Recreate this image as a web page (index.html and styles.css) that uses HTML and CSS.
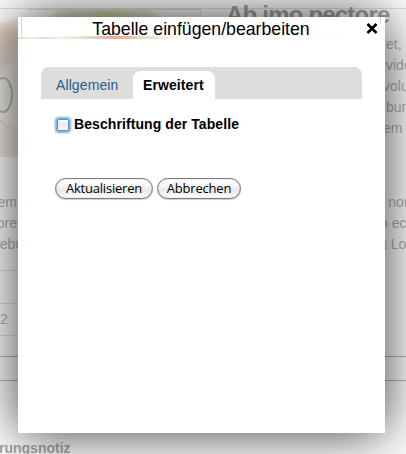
FILE: index.html
```html
<!DOCTYPE html>
<html lang="de">
<head>
<meta charset="utf-8">
<title>Tabelle einfügen/bearbeiten</title>
<link rel="stylesheet" href="styles.css">
</head>
<body>
<main class="page">
  <header class="article-head">
    <svg class="photo" width="202" height="148" viewBox="0 0 202 148">
      <defs>
        <linearGradient id="plate" x1="0" y1="0" x2="0" y2="1">
          <stop offset="0" stop-color="#fff"/>
          <stop offset=".12" stop-color="#f2e9e0"/>
          <stop offset=".4" stop-color="#eeeae4"/>
          <stop offset="1" stop-color="#f4f2ed"/>
        </linearGradient>
        <filter id="soft"><feGaussianBlur stdDeviation="4"/></filter>
      </defs>
      <path d="M0 14Q14 12 28 0H202V148H0Z" fill="url(#plate)"/>
      <g filter="url(#soft)">
        <ellipse cx="105" cy="9" rx="55" ry="10" fill="#d8d3b4"/>
        <ellipse cx="108" cy="3" rx="13" ry="3" fill="#b9c98e"/>
        <path d="M22 18Q20 50-4 66V20Z" fill="#e2d1c3"/>
        <path d="M0 112Q14 122 22 118V148H0Z" fill="#ebe7dd"/>
      </g>
      <ellipse cx="3" cy="86" rx="9" ry="17" fill="none" stroke="#b9b8b5" stroke-width="2"/>
      <path d="M0 111Q9 122 20 119" fill="none" stroke="#e2dfd6" stroke-width="2"/>
      <path d="M28 .5H200.5V12" fill="none" stroke="#ddd"/>
    </svg>
    <h1>Ab imo pectore</h1>
  </header>
  <div class="columns">
    <div class="col-left">
      <p>em</p><p>ore</p><p class="cut">rebu</p>
      <div class="rows"><div></div><div>2</div></div>
    </div>
    <div class="col-right">
      <p class="in">et, c</p><p class="in">vide</p><p>volup</p><p class="in">bur</p><p>em i</p>
      <p class="in second">&#8202;&#8202;nor</p><p class="out">o ec</p><p>t Lo</p>
    </div>
  </div>
  <div class="band"></div>
  <h2>rungsnotiz</h2>
</main>

<section class="dialog" role="dialog">
  <header class="titlebar">
    <svg class="strip" width="367" height="23" viewBox="0 0 367 23">
      <defs>
        <linearGradient id="peek">
          <stop offset="0" stop-color="#dedad6"/>
          <stop offset=".08" stop-color="#f3eeea"/>
          <stop offset=".15" stop-color="#f2d8cc"/>
          <stop offset=".25" stop-color="#f6ece2"/>
          <stop offset=".36" stop-color="#eee3d0"/>
          <stop offset=".46" stop-color="#d8d3bd"/>
          <stop offset=".56" stop-color="#f0a79a"/>
          <stop offset=".64" stop-color="#f2b4a4"/>
          <stop offset=".72" stop-color="#e3dcc6"/>
          <stop offset=".86" stop-color="#f8eed9"/>
          <stop offset="1" stop-color="#fff"/>
        </linearGradient>
      </defs>
      <path d="M3.500 0V20M362.500 7V0" stroke="#d5d5d5" fill="none"/>
      <path d="M0 20H25L70 19H170V22H0Z" fill="url(#peek)"/>
      <path d="M205 21.500H325" stroke="#eee" stroke-dasharray="3 9 2 14"/>
    </svg>
    <span class="title">Tabelle einfügen/bearbeiten</span>
    <svg class="close" width="12" height="11" viewBox="0 0 12 11"><path d="M1.500 1L10.500 10M10.500 1L1.500 10" stroke="#000" stroke-width="2.600"/></svg>
  </header>
  <div class="content">
    <nav class="tabs">
      <a class="tab">Allgemein</a>
      <a class="tab active">Erweitert</a>
    </nav>
    <form class="panel">
      <label class="caption"><span class="box"></span>Beschriftung der Tabelle</label>
      <div class="actions">
        <button type="button">Aktualisieren</button>
        <button type="button">Abbrechen</button>
      </div>
    </form>
  </div>
</section>
</body>
</html>
```
FILE: styles.css
```css
* { box-sizing: border-box; }
body {
  margin: 0;
  width: 406px;
  height: 454px;
  overflow: hidden;
  position: relative;
  background: #fff;
  font-family: "Liberation Sans", Arial, sans-serif;
}
.page {
  height: 454px;
  overflow: hidden;
  padding-top: 8px;
  color: #b4b4b4;
}
.article-head {
  display: flex;
  height: 25px;
  gap: 24px;
  border-top: 1px solid #e2e2e2;
}
.photo { flex: none; }
h1 {
  margin: -8px 0 0;
  font-size: 24px;
  line-height: 28px;
  letter-spacing: -.8px;
  white-space: nowrap;
  color: #a5a5a5;
}
.columns {
  display: flex;
  justify-content: space-between;
  height: 323px;
  font-size: 14px;
  line-height: 21px;
}
.columns p { margin: 0; white-space: nowrap; }
.col-left { width: 17px; padding-top: 159px; }
.col-left p { display: flex; justify-content: flex-end; }
.col-left .cut { margin-right: -6px; }
.col-right { width: 23px; padding-top: 1px; }
.col-right .in { padding-left: 3px; }
.col-right .out { margin-left: -3px; }
.col-right .second { margin-top: 53px; }
.rows { width: 20px; margin-top: 15px; }
.rows div {
  height: 33px;
  border-top: 1px solid #e4e4e4;
  line-height: 31px;
}
.rows div:last-child { border-bottom: 1px solid #e4e4e4; }
.band {
  height: 25px;
  border-top: 1px solid #b8b8b8;
  border-bottom: 1px solid #b8b8b8;
}
h2 {
  margin: 58px 0 0 -1px;
  font-size: 14px;
  line-height: 18px;
  color: #a8a8a8;
}
.dialog {
  position: absolute;
  left: 18px;
  top: 17px;
  width: 367px;
  height: 416px;
  background: #fff;
  box-shadow: 0 0 50px rgba(0, 0, 0, .78);
}
.titlebar {
  position: relative;
  display: flex;
  align-items: center;
  justify-content: center;
  height: 23px;
}
.strip { position: absolute; left: 0; top: 0; }
.title { position: relative; font-size: 17.7px; line-height: 23px; padding-top: 1px; color: #000; white-space: nowrap; margin-left: -1px; }
.close { position: absolute; right: 7px; top: 6px; }
.content { padding: 27px 23px 0; }
.tabs {
  display: flex;
  height: 32px;
  padding: 4px 0 0;
  background: #ddd;
  border-radius: 8px 8px 0 0;
  font-size: 14px;
  line-height: 28px;
}
.tab { width: 92px; padding-left: 15px; color: #2b5b8e; white-space: nowrap; letter-spacing: .1px; }
.tab.active {
  width: 82px;
  padding-left: 10px;
  background: #fff;
  color: #000;
  font-weight: bold;
  border-radius: 8px 8px 0 0;
}
.panel { padding: 15px 0 0 14px; }
.caption {
  display: flex;
  align-items: center;
  gap: 5px;
  height: 20px;
  font-size: 14px;
  font-weight: bold;
  letter-spacing: .08px;
  white-space: nowrap;
}
.box {
  width: 12px;
  height: 12px;
  margin: 1px 0 0 2px;
  border: 1px solid #5a8fc6;
  border-radius: 2px;
  background: linear-gradient(#fff, #e8e8e8 50%, #fff);
  box-shadow: 0 0 2px 2px #79ade2;
}
.actions { display: flex; gap: 4px; margin-top: 44px; }
button {
  width: 98px;
  height: 21px;
  padding: 0 0 1px;
  border: 1px solid #7d7d7d;
  border-radius: 11px;
  background: linear-gradient(#fff, #f2f2f2 48%, #e6e6e6 52%, #fff);
  box-shadow: inset 0 0 1px #777, 0 1px 1px #ccc;
  color: #000;
  font: 13px/18px "Open Sans", "Noto Sans", sans-serif;
  letter-spacing: -.2px;
  white-space: nowrap;
}
button + button { width: 84px; }
```
